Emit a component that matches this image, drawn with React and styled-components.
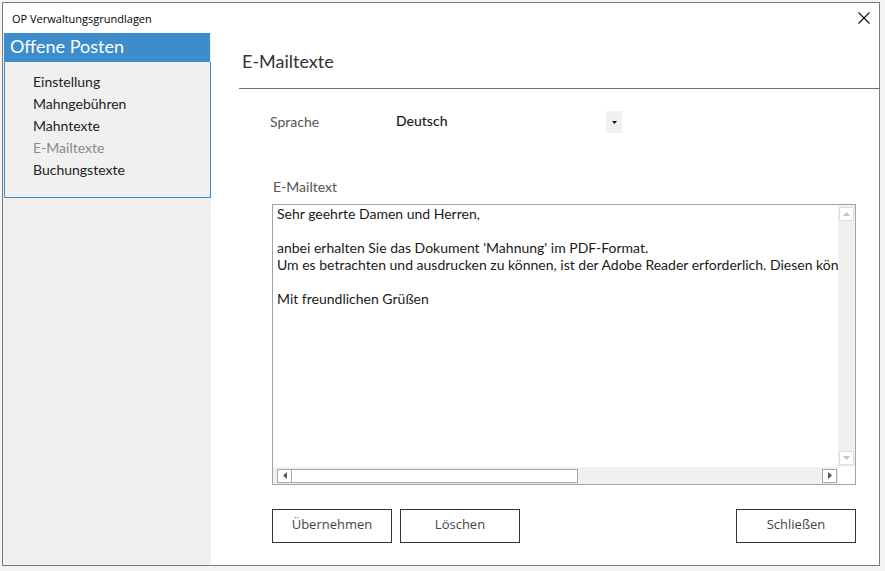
import styled, { createGlobalStyle } from 'styled-components'

const GlobalStyle = createGlobalStyle`
  html, body {
    margin: 0;
    padding: 0;
    background: #f4f4f4;
  }
  body {
    font-family: Lato, "Open Sans", sans-serif;
  }
`

const navItems = [
  { label: 'Einstellung' },
  { label: 'Mahngebühren' },
  { label: 'Mahntexte' },
  { label: 'E-Mailtexte', active: true },
  { label: 'Buchungstexte' },
]

const mailLines = [
  'Sehr geehrte Damen und Herren,',
  '',
  "anbei erhalten Sie das Dokument 'Mahnung' im PDF-Format.",
  'Um es betrachten und ausdrucken zu können, ist der Adobe Reader erforderlich. Diesen können Sie kostenlos im Internet herunterladen.',
  '',
  'Mit freundlichen Grüßen',
]

function App() {
  return (
    <Page>
      <GlobalStyle />
      <Window>
        <TitleBar>
          <Title>OP Verwaltungsgrundlagen</Title>
          <CloseButton aria-label="Schließen">
            <svg width="12" height="12" viewBox="0 0 12 12">
              <path d="M0.5 0.5 L11.5 11.5 M11.5 0.5 L0.5 11.5" stroke="#111" strokeWidth="1.1" fill="none" />
            </svg>
          </CloseButton>
        </TitleBar>
        <Body>
          <Sidebar>
            <SideHeader>Offene Posten</SideHeader>
            <NavBox>
              {navItems.map((item) => (
                <NavItem key={item.label} $active={item.active}>{item.label}</NavItem>
              ))}
            </NavBox>
          </Sidebar>
          <Main>
            <Heading>E-Mailtexte</Heading>
            <FieldRow>
              <FieldLabel>Sprache</FieldLabel>
              <SelectValue>Deutsch</SelectValue>
              <SelectArrow>
                <svg width="5" height="3" viewBox="0 0 5 3">
                  <path d="M0 0 H5 L2.5 3 Z" fill="#111" />
                </svg>
              </SelectArrow>
            </FieldRow>
            <AreaLabel>E-Mailtext</AreaLabel>
            <TextBox>
              <TextContent>
                {mailLines.map((line, i) => (
                  <TextLine key={i}>{line || '\u00a0'}</TextLine>
                ))}
              </TextContent>
              <VScroll>
                <ScrollButton $disabled>
                  <svg width="7" height="4" viewBox="0 0 7 4"><path d="M0 4 L3.5 0 L7 4 Z" fill="#c4c4c4" /></svg>
                </ScrollButton>
                <ScrollButton $disabled>
                  <svg width="7" height="4" viewBox="0 0 7 4"><path d="M0 0 L3.5 4 L7 0 Z" fill="#c4c4c4" /></svg>
                </ScrollButton>
              </VScroll>
              <HScroll>
                <ScrollButton>
                  <svg width="4" height="7" viewBox="0 0 4 7"><path d="M4 0 L0 3.5 L4 7 Z" fill="#555" /></svg>
                </ScrollButton>
                <Thumb />
                <Spacer />
                <ScrollButton>
                  <svg width="4" height="7" viewBox="0 0 4 7"><path d="M0 0 L4 3.5 L0 7 Z" fill="#555" /></svg>
                </ScrollButton>
              </HScroll>
              <Corner />
            </TextBox>
            <ButtonRow>
              <Button>Übernehmen</Button>
              <Button>Löschen</Button>
              <Spacer />
              <Button>Schließen</Button>
            </ButtonRow>
          </Main>
        </Body>
      </Window>
    </Page>
  )
}

export default App

const Page = styled.div`
  padding: 2px 0 0 2px;
  height: 571px;
  box-sizing: border-box;
`

const Window = styled.div`
  width: 878px;
  height: 564px;
  box-sizing: border-box;
  border: 1px solid #7a7a7a;
  background: #fff;
  display: flex;
  flex-direction: column;
`

const TitleBar = styled.div`
  height: 30px;
  display: flex;
  align-items: center;
  padding: 0 0 0 9px;
  flex-shrink: 0;
`

const Title = styled.div`
  font-family: "Open Sans", sans-serif;
  font-size: 11px;
  color: #000;
  flex: 1;
`

const CloseButton = styled.div`
  width: 30px;
  height: 30px;
  display: flex;
  align-items: center;
  justify-content: center;
  svg { display: block; }
`

const Body = styled.div`
  flex: 1;
  display: flex;
  min-height: 0;
`

const Sidebar = styled.div`
  width: 208px;
  background: #f0f0f0;
  display: flex;
  flex-direction: column;
  padding-left: 1px;
  box-sizing: border-box;
`

const SideHeader = styled.div`
  height: 29px;
  background: #3d8dcc;
  color: #fff;
  font-size: 18px;
  line-height: 27px;
  padding-left: 6px;
  margin-right: 1px;
`

const NavBox = styled.div`
  height: 136px;
  box-sizing: border-box;
  border: 1px solid #3d8dcc;
  border-top: none;
  padding: 9px 0 0 28px;
`

const NavItem = styled.div`
  font-size: 14px;
  line-height: 22px;
  color: ${(p) => (p.$active ? '#8a8a8a' : '#222')};
`

const Main = styled.div`
  flex: 1;
  background: #fff;
  display: flex;
  flex-direction: column;
`

const Heading = styled.div`
  margin-left: 28px;
  padding: 16px 0 15px 3px;
  font-size: 18px;
  line-height: 24px;
  color: #333;
  border-bottom: 1px solid #6e6e6e;
`

const FieldRow = styled.div`
  margin: 22px 0 0 59px;
  height: 22px;
  display: flex;
  align-items: center;
`

const FieldLabel = styled.div`
  width: 126px;
  font-size: 14px;
  color: #555;
  padding-bottom: 2px;
`

const SelectValue = styled.div`
  width: 210px;
  font-size: 14px;
  font-weight: 500;
  color: #1a1a1a;
  padding-bottom: 4px;
`

const SelectArrow = styled.div`
  width: 16px;
  height: 22px;
  background: #f0f0f0;
  display: flex;
  align-items: center;
  justify-content: center;
  svg { display: block; }
`

const AreaLabel = styled.div`
  margin: 45px 0 0 62px;
  font-size: 14px;
  line-height: 18px;
  color: #555;
`

const TextBox = styled.div`
  margin: 8px 0 0 61px;
  width: 584px;
  height: 281px;
  box-sizing: border-box;
  border: 1px solid #a3a3a3;
  display: grid;
  grid-template-columns: 1fr 17px;
  grid-template-rows: 1fr 17px;
  overflow: hidden;
`

const TextContent = styled.div`
  padding: 0 0 0 4px;
  overflow: hidden;
  font-size: 14px;
  line-height: 17px;
  color: #1a1a1a;
`

const TextLine = styled.div`
  white-space: pre;
`

const VScroll = styled.div`
  background: #f0f0f0;
  display: flex;
  flex-direction: column;
  justify-content: space-between;
  align-items: center;
  padding: 2px 0;
`

const HScroll = styled.div`
  background: #f0f0f0;
  display: flex;
  align-items: center;
  padding: 0 1px 0 4px;
`

const ScrollButton = styled.div`
  width: 15px;
  height: 14px;
  box-sizing: border-box;
  background: #fff;
  border: 1px solid ${(p) => (p.$disabled ? '#dedede' : '#a8a8a8')};
  display: flex;
  align-items: center;
  justify-content: center;
  flex-shrink: 0;
  svg { display: block; }
`

const Thumb = styled.div`
  width: 286px;
  height: 14px;
  box-sizing: border-box;
  background: #fff;
  border: 1px solid #a8a8a8;
  border-left: none;
`

const Spacer = styled.div`
  flex: 1;
`

const Corner = styled.div`
  background: #fff;
`

const ButtonRow = styled.div`
  margin: 24px 0 0 61px;
  width: 584px;
  display: flex;
  gap: 8px;
`

const Button = styled.button`
  width: 120px;
  height: 34px;
  box-sizing: border-box;
  border: 1px solid #333;
  background: #fff;
  font-family: "Open Sans", sans-serif;
  font-size: 13px;
  color: #444;
  padding: 0 0 4px;
  cursor: pointer;
`
